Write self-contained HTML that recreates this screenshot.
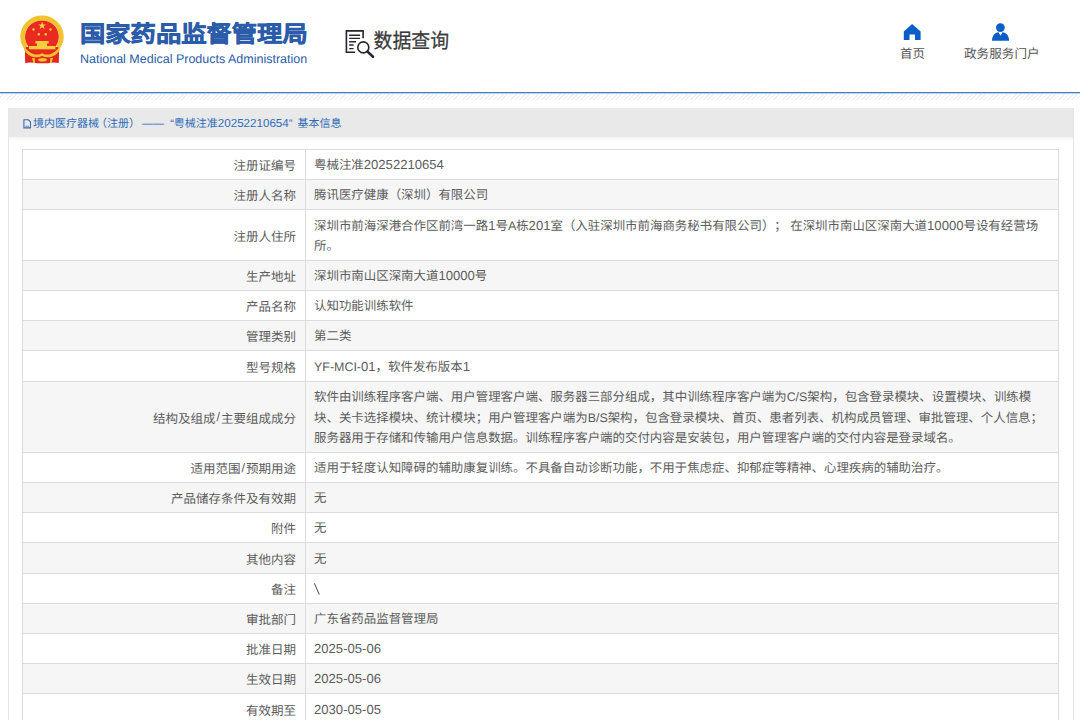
<!DOCTYPE html>
<html lang="zh-CN"><head><meta charset="utf-8">
<style>
*{margin:0;padding:0;box-sizing:border-box}
html,body{width:1080px;height:720px;overflow:hidden;background:#fff;font-family:"Liberation Sans",sans-serif;color:#333;text-rendering:geometricPrecision;text-spacing-trim:space-all}
.abs{position:absolute}
.t1{position:absolute;left:80px;top:18px;font-size:25.3px;font-weight:bold;-webkit-text-stroke:0.6px #2b5ca9;color:#2b5ca9;white-space:nowrap;line-height:30px;transform:scaleY(0.91);transform-origin:0 100%}
.t2{position:absolute;left:80px;top:52px;font-size:12.5px;color:#2b5ca9;white-space:nowrap;line-height:15px}
.sqt{position:absolute;left:373.5px;top:28px;font-size:18.9px;-webkit-text-stroke:0.25px #3a3a3a;transform:scaleY(1.09);transform-origin:0 0;color:#3a3a3a;white-space:nowrap;line-height:26px}
.nav{position:absolute;top:47px;font-size:12.5px;color:#555;white-space:nowrap;line-height:14px}
.line{position:absolute;left:0;top:92px;width:1080px;height:1px;background:#4a7db8}
.line2{position:absolute;left:0;top:93px;width:1080px;height:1px;background:#b5d6f2}
.hatch{position:absolute;left:0;top:94px;width:1080px;height:6px;background:repeating-linear-gradient(135deg,#fff 0 1.9px,#f0f0f0 1.9px 3.1px)}
.box{position:absolute;left:8px;top:108px;width:1066px;height:620px;border-left:1px solid #e6e6e6;border-right:1px solid #e6e6e6;background:#fff}
.bh{position:absolute;left:0;top:0;width:100%;height:29px;background:#e9e9e9}
.bh2{position:absolute;left:0;top:29px;width:100%;height:4px;background:linear-gradient(#f4f4f4,#fff)}
.bct{position:absolute;left:33px;top:117px;font-size:11px;color:#2d6cb8;white-space:nowrap;line-height:14px}
.r{position:absolute;left:22px;width:1037px;border-top:1px solid #dcdcdc;border-left:1px solid #dcdcdc;border-right:1px solid #dcdcdc;background:#fff;font-size:12.45px;color:#5c5c5c;white-space:nowrap}
.r.g{background:#f6f6f6}
.k{position:absolute;left:0;top:0;width:283px;font-size:12.5px;height:100%;border-right:1px solid #dcdcdc;text-align:right;padding-right:9px;padding-top:0px;display:flex;align-items:center;justify-content:flex-end}
.v{position:absolute;left:291px;top:0;height:100%;padding-top:2px;display:flex;align-items:center;line-height:20.5px}

.n{font-size:13.1px}

</style></head><body>
<svg class="abs" style="left:15px;top:10px" width="55" height="60" viewBox="15 10 55 60">
  <path d="M24.8 47 L59.2 47 L58.8 63 Q53 62 48 63.2 L37 63.2 Q31 62 25.2 63 Z" fill="#e3271f"/>
  <ellipse cx="41.9" cy="36.8" rx="17" ry="16.6" fill="#ea2a21"/>
  <path d="M26.19 47.27 A19.3 18.6 0 1 1 57.81 47.27" fill="none" stroke="#f4c22f" stroke-width="4.8"/>
  <path d="M24.3 46.5 Q28 52 34 54.2 Q39 55.2 42 53.2 Q45 55.2 50 54.2 Q56 52 59.7 46.5 L59.9 50 Q56 56 50 57.2 Q45 57.6 42 56 Q39 57.6 34 57.2 Q28 56 24.1 50Z" fill="#f4c22f"/>
  <path d="M35.4 41 H48.7 V43.5 H47 V46 H37 V43.5 H35.4Z" fill="#f7cd40"/>
  <path d="M29 46 H55.4 V49.3 H29Z" fill="#f7cd40"/>
  <ellipse cx="42.5" cy="59.8" rx="4.4" ry="1.8" fill="#f4c22f"/>
  <path d="M32 58 L34.6 58 L35.2 63 L33.4 63Z M50.4 58 L53 58 L51.6 63 L49.8 63Z" fill="#f4c22f"/>
  <polygon points="42.1,21.7 43.1,24.4 46,24.4 43.7,26.1 44.5,28.9 42.1,27.2 39.7,28.9 40.5,26.1 38.2,24.4 41.1,24.4" fill="#f8d348"/>
  <circle cx="33.5" cy="29.5" r="1.2" fill="#f8d348"/>
  <circle cx="50.5" cy="29.5" r="1.2" fill="#f8d348"/>
  <circle cx="38.8" cy="34.2" r="1.2" fill="#f8d348"/>
  <circle cx="45.8" cy="34.2" r="1.2" fill="#f8d348"/>
</svg>
<div class="t1">国家药品监督管理局</div>
<div class="t2">National Medical Products Administration</div>
<svg class="abs" style="left:340px;top:25px" width="40" height="35" viewBox="340 25 40 35">
  <g fill="none" stroke="#25252f" stroke-linecap="butt">
    <path d="M355 52.3 L346.4 52.3 L346.4 30.9 L363.1 30.9 L363.1 38.2" stroke-width="1.6"/>
    <path d="M349.2 35.2 H360 M349.2 38.4 H360 M349.2 41.8 H356 M349.2 45 H353.6 M349.2 48.6 H353.6" stroke-width="1.4"/>
    <circle cx="363.3" cy="47.4" r="5.5" stroke-width="1.6"/>
    <path d="M367.5 51.6 L373 56.8" stroke-width="2.6" stroke-linecap="round"/>
  </g>
</svg>
<div class="sqt">数据查询</div>
<svg class="abs" style="left:900px;top:20px" width="25" height="25" viewBox="900 20 25 25">
  <path d="M912.1 23.9 L920.6 31.4 L920.6 39.9 L915 39.9 L915 34.5 L909.5 34.5 L909.5 39.9 L903.8 39.9 L903.8 31.4 Z" fill="#0b5dc8"/>
</svg>
<div class="nav" style="left:900px">首页</div>
<svg class="abs" style="left:988px;top:20px" width="25" height="25" viewBox="988 20 25 25">
  <circle cx="1000.4" cy="27.6" r="4.4" fill="#0b5dc8"/>
  <path d="M992 40.7 C992.2 35.5 994.8 32.6 998.6 32.3 L1000.5 35.8 L1002.5 32.3 C1006.2 32.6 1009 35.5 1009.1 40.7 Z" fill="#0b5dc8"/>
</svg>
<div class="nav" style="left:964px;font-size:12.6px">政务服务门户</div>
<div class="line"></div><div class="line2"></div>
<div class="hatch"></div>
<div class="box"><div class="bh"></div><div class="bh2"></div></div>
<svg class="abs" style="left:20px;top:116px" width="14" height="16" viewBox="20 116 14 16">
  <path d="M23.9 119.8 H28.4 L30.5 121.9 V127.9 H23.9 Z" fill="#dfe9f4" stroke="#40699f" stroke-width="1.1" stroke-linejoin="round"/>
  <path d="M25.4 126.3 H29" stroke="#40699f" stroke-width="0.7"/>
</svg>
<div class="bct">境内医疗器械<span style="margin-left:-3px">（注册）</span> <span style="margin-left:-1px">——</span> <span style="margin-left:3px">“</span>粤械注准<span style="font-size:11.6px">20252210654</span><span style="margin-right:2px">”</span>&nbsp;基本信息</div>

<div class="r" style="top:149px;height:30px"><div class="k">注册证编号</div><div class="v"><div>粤械注准<span class="n">20252210654</span></div></div></div>
<div class="r g" style="top:179px;height:30px"><div class="k">注册人名称</div><div class="v"><div>腾讯医疗健康（深圳）有限公司</div></div></div>
<div class="r" style="top:209px;height:51px"><div class="k">注册人住所</div><div class="v"><div>深圳市前海深港合作区前湾一路<span class="n">1</span>号A栋<span class="n">201</span>室（入驻深圳市前海商务秘书有限公司）； 在深圳市南山区深南大道<span class="n">10000</span>号设有经营场<br>所。</div></div></div>
<div class="r g" style="top:260px;height:30px"><div class="k">生产地址</div><div class="v"><div>深圳市南山区深南大道<span class="n">10000</span>号</div></div></div>
<div class="r" style="top:290px;height:30px"><div class="k">产品名称</div><div class="v"><div>认知功能训练软件</div></div></div>
<div class="r g" style="top:320px;height:30px"><div class="k">管理类别</div><div class="v"><div>第二类</div></div></div>
<div class="r" style="top:350px;height:31px"><div class="k">型号规格</div><div class="v"><div>YF-MCI-<span class="n">01</span>，软件发布版本<span class="n">1</span></div></div></div>
<div class="r g" style="top:381px;height:71px"><div class="k">结构及组成<span style="margin:0 1px">/</span>主要组成成分</div><div class="v"><div>软件由训练程序客户端、用户管理客户端、服务器三部分组成，其中训练程序客户端为C/S架构，包含登录模块、设置模块、训练模<br>块、关卡选择模块、统计模块；用户管理客户端为B/S架构，包含登录模块、首页、患者列表、机构成员管理、审批管理、个人信息；<br>服务器用于存储和传输用户信息数据。训练程序客户端的交付内容是安装包，用户管理客户端的交付内容是登录域名。</div></div></div>
<div class="r" style="top:452px;height:30px"><div class="k">适用范围<span style="margin:0 1px">/</span>预期用途</div><div class="v"><div>适用于轻度认知障碍的辅助康复训练。不具备自动诊断功能，不用于焦虑症、抑郁症等精神、心理疾病的辅助治疗。</div></div></div>
<div class="r g" style="top:482px;height:30px"><div class="k">产品储存条件及有效期</div><div class="v"><div>无</div></div></div>
<div class="r" style="top:512px;height:30px"><div class="k">附件</div><div class="v"><div>无</div></div></div>
<div class="r g" style="top:542px;height:31px"><div class="k">其他内容</div><div class="v"><div>无</div></div></div>
<div class="r" style="top:573px;height:30px"><div class="k">备注</div><div class="v"><div><svg width="8" height="14" viewBox="0 0 8 14" style="display:block"><path d="M0.4 0.4 L5.3 11.6" stroke="#555" stroke-width="1.1"/></svg></div></div></div>
<div class="r g" style="top:603px;height:30px"><div class="k">审批部门</div><div class="v"><div>广东省药品监督管理局</div></div></div>
<div class="r" style="top:633px;height:30px"><div class="k">批准日期</div><div class="v"><div><span class="n">2025-05-06</span></div></div></div>
<div class="r g" style="top:663px;height:30px"><div class="k">生效日期</div><div class="v"><div><span class="n">2025-05-06</span></div></div></div>
<div class="r" style="top:693px;height:31px"><div class="k">有效期至</div><div class="v"><div><span class="n">2030-05-05</span></div></div></div>
</body></html>
